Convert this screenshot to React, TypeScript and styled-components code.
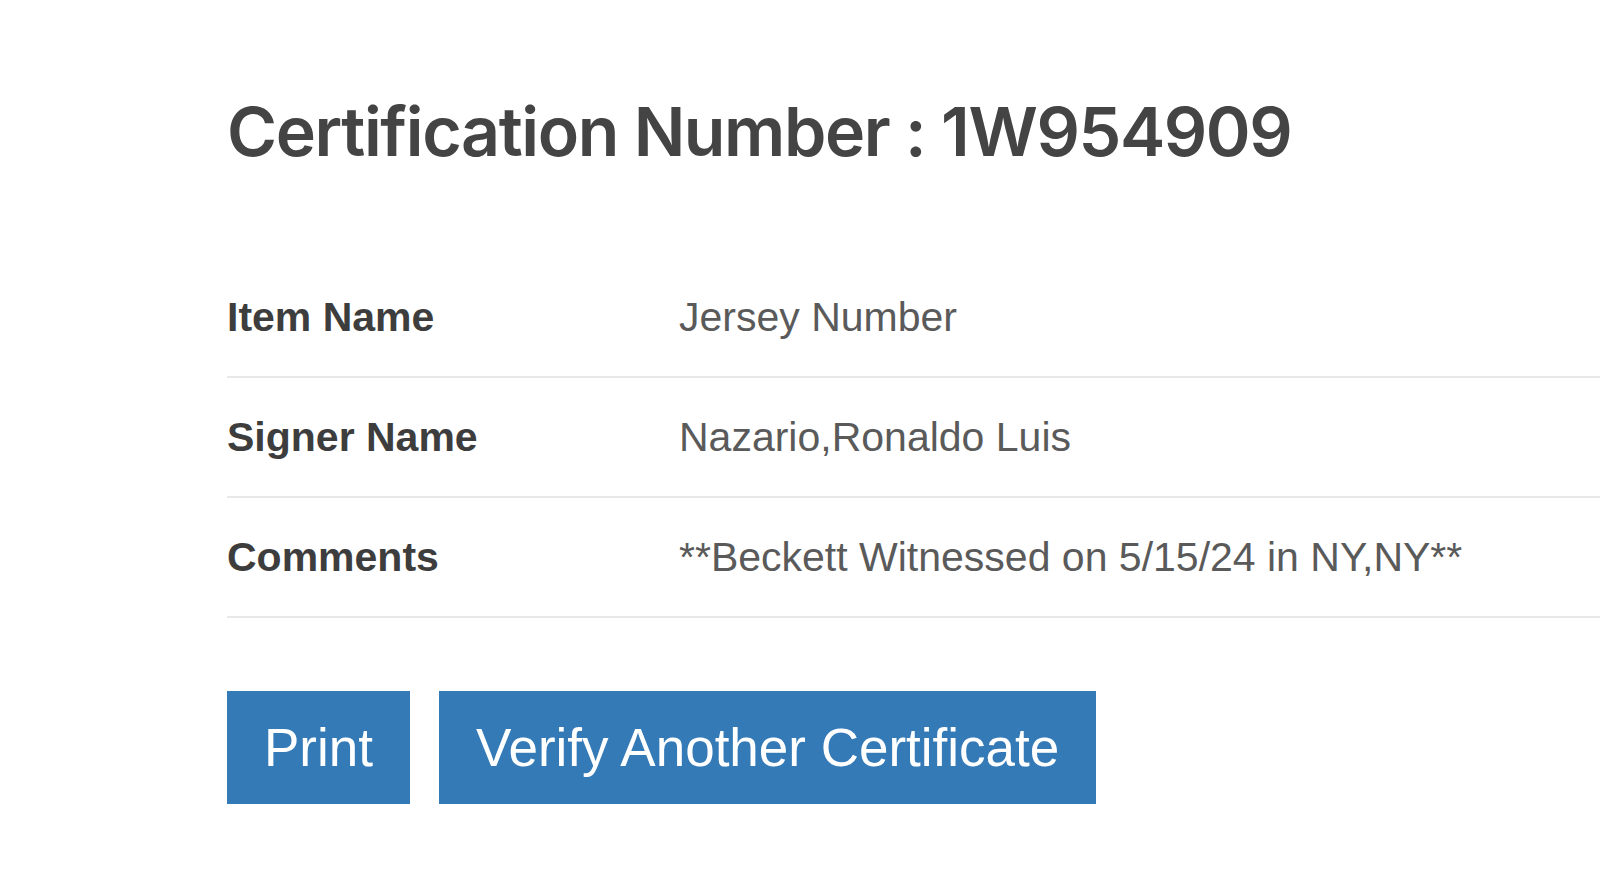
import React from 'react';
import styled, { createGlobalStyle } from 'styled-components';

const GlobalStyle = createGlobalStyle`
    html, body {
        margin: 0;
        padding: 0;
        background: #ffffff;
    }
    body {
        font-family: 'Liberation Sans', Arial, sans-serif;
        overflow: hidden;
    }
`;

const Page = styled.div`
    width: 1600px;
    height: 873px;
    padding-left: 227px;
    box-sizing: border-box;
    overflow: hidden;
`;

const Title = styled.h1`
    margin: 0;
    padding-top: 97px;
    font-family: Inter, 'Liberation Sans', sans-serif;
    font-weight: 600;
    font-size: 68px;
    line-height: 68px;
    letter-spacing: -1.4px;
    color: #444444;
    white-space: nowrap;
`;

const Table = styled.div`
    margin-top: 93px;
    width: 1500px;
`;

const Row = styled.div`
    display: grid;
    grid-template-columns: 452px 1fr;
    height: 120px;
    box-sizing: border-box;
    border-bottom: 2px solid #e8e8e8;
    align-items: center;
`;

const Cell = styled.div<{ $label?: boolean }>`
    font-size: 41px;
    line-height: 118px;
    white-space: nowrap;
    font-weight: ${(p) => (p.$label ? 700 : 400)};
    color: ${(p) => (p.$label ? '#3d3d3d' : '#5a5a5a')};
`;

const Actions = styled.div`
    display: flex;
    gap: 29px;
    margin-top: 73px;
`;

const Button = styled.button`
    height: 113px;
    padding: 0 37px;
    border: none;
    border-radius: 0;
    background: #337ab7;
    color: #ffffff;
    font-family: 'Liberation Sans', Arial, sans-serif;
    font-size: 53px;
    line-height: 113px;
    cursor: pointer;
`;

const rows = [
    { label: 'Item Name', value: 'Jersey Number' },
    { label: 'Signer Name', value: 'Nazario,Ronaldo Luis' },
    { label: 'Comments', value: '**Beckett Witnessed on 5/15/24 in NY,NY**' },
];

const App = () => {
    return (
        <>
            <GlobalStyle />
            <Page>
                <Title>Certification Number : 1W954909</Title>
                <Table>
                    {rows.map((row) => (
                        <Row key={row.label}>
                            <Cell $label>{row.label}</Cell>
                            <Cell>{row.value}</Cell>
                        </Row>
                    ))}
                </Table>
                <Actions>
                    <Button>Print</Button>
                    <Button>Verify Another Certificate</Button>
                </Actions>
            </Page>
        </>
    );
};

export default App;
